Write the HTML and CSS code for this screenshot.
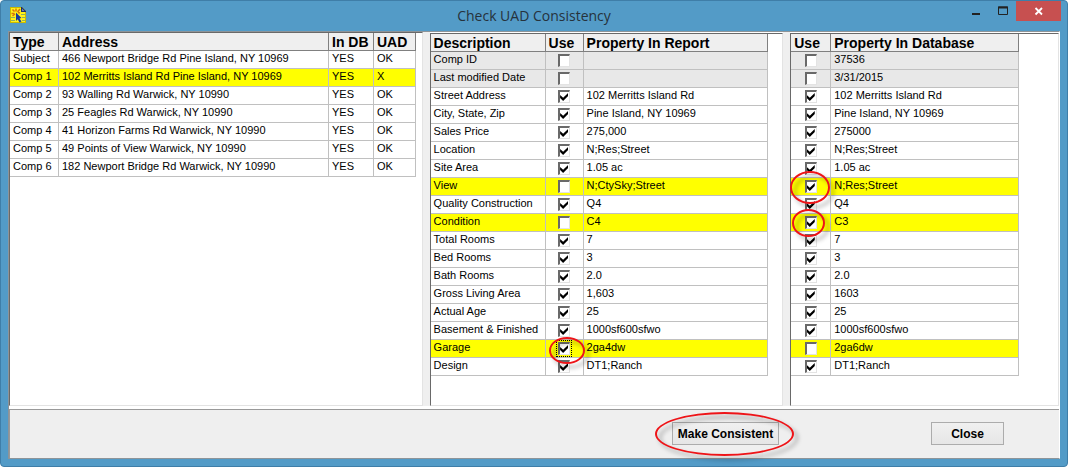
FILE: index.html
```
<!DOCTYPE html>
<html lang="en">
<head>
<meta charset="utf-8">
<title>Check UAD Consistency</title>
<link rel="stylesheet" href="styles.css">
</head>
<body>
<div class="window">
  <header class="titlebar">
    <svg class="app-icon" width="17" height="17" viewBox="0 0 17 17" aria-hidden="true">
      <path d="M0 0h12l4 4v12H0z" fill="#fff21a"/>
      <path d="M.5 0v16M0 15.500h16M15.500 4v12M0 .5h12" stroke="#c9b800" fill="none"/>
      <path d="M11 0h1l4 4v1h-5z" fill="#1c2f6a"/>
      <path d="M12 1.500l2.500 2.500H12z" fill="#6f86b8"/>
      <path d="M1 10.500h4M1 13.500h4M11 7.500h4M12 10.500h3M12 13.500h3" stroke="#8fae62"/>
      <path d="M2.500 2.500l2 2M6 1.500v3M10 2L7.500 5M1.500 6.500h3M2.500 9l2.500-2M8 5.500l2 .5" stroke="#d9730d" stroke-width="1.500"/>
      <path d="M6 5.500l5.500 5.500-2 .5 2 3-2 1-1.800-3.200L6 14z" fill="#16389c"/>
    </svg>
    <h1 class="title">Check UAD Consistency</h1>
    <div class="controls">
      <button class="ctl" type="button" aria-label="Minimize"><svg width="10" height="12" viewBox="0 0 10 12"><path d="M1 8h8v2H1z" fill="#222"/></svg></button>
      <button class="ctl" type="button" aria-label="Maximize"><svg width="12" height="12" viewBox="0 0 12 12"><path d="M1.500 2h9v7.500h-9z" fill="none" stroke="#222"/><path d="M1 2.500h10" stroke="#222" stroke-width="2"/></svg></button>
      <button class="ctl ctl-close" type="button" aria-label="Close window"><svg width="10" height="10" viewBox="0 0 10 10"><path d="M1.500 2l6.500 6.500M8 2L1.500 8.500" stroke="#fff" stroke-width="1.800"/></svg></button>
    </div>
  </header>
  <main class="client">
    <div class="panels">
      <section class="panel panel-comps">
        <table class="grid">
          <thead><tr><th class="c-type">Type</th><th class="c-address">Address</th><th class="c-db">In DB</th><th class="c-uad">UAD</th></tr></thead>
          <tbody>
            <tr><td>Subject</td><td>466 Newport Bridge Rd Pine Island, NY 10969</td><td>YES</td><td>OK</td></tr>
            <tr class="mark"><td>Comp 1</td><td>102 Merritts Island Rd Pine Island, NY 10969</td><td>YES</td><td>X</td></tr>
            <tr><td>Comp 2</td><td>93 Walling Rd Warwick, NY 10990</td><td>YES</td><td>OK</td></tr>
            <tr><td>Comp 3</td><td>25 Feagles Rd Warwick, NY 10990</td><td>YES</td><td>OK</td></tr>
            <tr><td>Comp 4</td><td>41 Horizon Farms Rd Warwick, NY 10990</td><td>YES</td><td>OK</td></tr>
            <tr><td>Comp 5</td><td>49 Points of View Warwick, NY 10990</td><td>YES</td><td>OK</td></tr>
            <tr><td>Comp 6</td><td>182 Newport Bridge Rd Warwick, NY 10990</td><td>YES</td><td>OK</td></tr>
          </tbody>
        </table>
      </section>
      <section class="panel panel-report">
        <table class="grid">
          <thead><tr><th class="c-desc">Description</th><th class="c-use">Use</th><th class="c-report">Property In Report</th></tr></thead>
          <tbody>
            <tr class="off"><td>Comp ID</td><td class="use"><input type="checkbox" aria-label="Use report Comp ID"></td><td></td></tr>
            <tr class="off"><td>Last modified Date</td><td class="use"><input type="checkbox" aria-label="Use report Last modified Date"></td><td></td></tr>
            <tr><td>Street Address</td><td class="use"><input type="checkbox" checked aria-label="Use report Street Address"></td><td>102 Merritts Island Rd</td></tr>
            <tr><td>City, State, Zip</td><td class="use"><input type="checkbox" checked aria-label="Use report City, State, Zip"></td><td>Pine Island, NY 10969</td></tr>
            <tr><td>Sales Price</td><td class="use"><input type="checkbox" checked aria-label="Use report Sales Price"></td><td>275,000</td></tr>
            <tr><td>Location</td><td class="use"><input type="checkbox" checked aria-label="Use report Location"></td><td>N;Res;Street</td></tr>
            <tr><td>Site Area</td><td class="use"><input type="checkbox" checked aria-label="Use report Site Area"></td><td>1.05 ac</td></tr>
            <tr class="mark"><td>View</td><td class="use"><input type="checkbox" aria-label="Use report View"></td><td>N;CtySky;Street</td></tr>
            <tr><td>Quality Construction</td><td class="use"><input type="checkbox" checked aria-label="Use report Quality Construction"></td><td>Q4</td></tr>
            <tr class="mark"><td>Condition</td><td class="use"><input type="checkbox" aria-label="Use report Condition"></td><td>C4</td></tr>
            <tr><td>Total Rooms</td><td class="use"><input type="checkbox" checked aria-label="Use report Total Rooms"></td><td>7</td></tr>
            <tr><td>Bed Rooms</td><td class="use"><input type="checkbox" checked aria-label="Use report Bed Rooms"></td><td>3</td></tr>
            <tr><td>Bath Rooms</td><td class="use"><input type="checkbox" checked aria-label="Use report Bath Rooms"></td><td>2.0</td></tr>
            <tr><td>Gross Living Area</td><td class="use"><input type="checkbox" checked aria-label="Use report Gross Living Area"></td><td>1,603</td></tr>
            <tr><td>Actual Age</td><td class="use"><input type="checkbox" checked aria-label="Use report Actual Age"></td><td>25</td></tr>
            <tr><td>Basement &amp; Finished</td><td class="use"><input type="checkbox" checked aria-label="Use report Basement and Finished"></td><td>1000sf600sfwo</td></tr>
            <tr class="mark"><td>Garage</td><td class="use"><input class="focused" type="checkbox" checked aria-label="Use report Garage"><span class="ring ring-garage"></span></td><td>2ga4dw</td></tr>
            <tr><td>Design</td><td class="use"><input type="checkbox" checked aria-label="Use report Design"></td><td>DT1;Ranch</td></tr>
          </tbody>
        </table>
      </section>
      <section class="panel panel-database">
        <table class="grid">
          <thead><tr><th class="c-use-db">Use</th><th class="c-database">Property In Database</th></tr></thead>
          <tbody>
            <tr class="off"><td class="use"><input type="checkbox" aria-label="Use database Comp ID"></td><td>37536</td></tr>
            <tr class="off"><td class="use"><input type="checkbox" aria-label="Use database Last modified Date"></td><td>3/31/2015</td></tr>
            <tr><td class="use"><input type="checkbox" checked aria-label="Use database Street Address"></td><td>102 Merritts Island Rd</td></tr>
            <tr><td class="use"><input type="checkbox" checked aria-label="Use database City, State, Zip"></td><td>Pine Island, NY 10969</td></tr>
            <tr><td class="use"><input type="checkbox" checked aria-label="Use database Sales Price"></td><td>275000</td></tr>
            <tr><td class="use"><input type="checkbox" checked aria-label="Use database Location"></td><td>N;Res;Street</td></tr>
            <tr><td class="use"><input type="checkbox" checked aria-label="Use database Site Area"></td><td>1.05 ac</td></tr>
            <tr class="mark"><td class="use"><input type="checkbox" checked aria-label="Use database View"><span class="ring ring-view"></span></td><td>N;Res;Street</td></tr>
            <tr><td class="use"><input type="checkbox" checked aria-label="Use database Quality Construction"></td><td>Q4</td></tr>
            <tr class="mark"><td class="use"><input type="checkbox" checked aria-label="Use database Condition"><span class="ring ring-condition"></span></td><td>C3</td></tr>
            <tr><td class="use"><input type="checkbox" checked aria-label="Use database Total Rooms"></td><td>7</td></tr>
            <tr><td class="use"><input type="checkbox" checked aria-label="Use database Bed Rooms"></td><td>3</td></tr>
            <tr><td class="use"><input type="checkbox" checked aria-label="Use database Bath Rooms"></td><td>2.0</td></tr>
            <tr><td class="use"><input type="checkbox" checked aria-label="Use database Gross Living Area"></td><td>1603</td></tr>
            <tr><td class="use"><input type="checkbox" checked aria-label="Use database Actual Age"></td><td>25</td></tr>
            <tr><td class="use"><input type="checkbox" checked aria-label="Use database Basement and Finished"></td><td>1000sf600sfwo</td></tr>
            <tr class="mark"><td class="use"><input type="checkbox" aria-label="Use database Garage"></td><td>2ga6dw</td></tr>
            <tr><td class="use"><input type="checkbox" checked aria-label="Use database Design"></td><td>DT1;Ranch</td></tr>
          </tbody>
        </table>
      </section>
    </div>
    <footer class="actions">
      <div class="action-main"><button class="btn btn-main" type="button">Make Consistent</button><span class="ring ring-button"></span></div>
      <button class="btn btn-close" type="button">Close</button>
    </footer>
  </main>
</div>
</body>
</html>
```

FILE: styles.css
```
* {
  box-sizing: border-box;
}

body {
  margin: 0;
  background: #fff;
  color: #000;
  font: 11px/14px "Liberation Sans", Arial, sans-serif;
}

.window {
  display: flex;
  flex-direction: column;
  min-height: 100vh;
  padding: 0 7px 7px;
  border: 1px solid #3f7ea8;
  border-radius: 4px;
  background: #539bc7;
}

/* Title bar */
.titlebar {
  display: grid;
  grid-template-columns: 1fr auto 1fr;
  height: 30px;
}

.app-icon {
  margin: 6px 0 0 2px;
}

.title {
  margin: 0;
  color: #26323c;
  font: 400 14px/29px "Open Sans", "Noto Sans", sans-serif;
}

.controls {
  display: flex;
  justify-content: flex-end;
  align-items: flex-start;
  margin-right: -1px;
}

.ctl {
  display: flex;
  justify-content: center;
  align-items: center;
  width: 27px;
  height: 20px;
  padding: 0;
  border: 0;
  background: transparent;
}

.ctl-close {
  width: 45px;
  background: #c75050;
}

/* Client area */
.client {
  display: flex;
  flex: 1;
  flex-direction: column;
  border: 1px solid #8d9499;
  border-right-color: #fff;
  background: #efefef;
}

.panels {
  display: grid;
  flex: 1;
  grid-template-columns: 414fr 354fr 269fr;
  gap: 7px;
  background: #efefef;
}

.panel {
  border: 1px solid #e3e3e3;
  border-top-color: #696969;
  border-left-color: #696969;
  background: #fff;
}

.panel-report,
.panel-database {
  margin-top: 1px;
  box-shadow: 0 -1px 0 #fff;
}

.grid {
  border-spacing: 0;
  table-layout: fixed;
  width: 0;
}

.grid th {
  height: 18px;
  padding: 1px 0 0 3px;
  border-right: 1px solid #808080;
  border-bottom: 1px solid #808080;
  background: #efefef;
  font: 700 14px/16px "Liberation Sans", Arial, sans-serif;
  text-align: left;
  white-space: nowrap;
}

.grid td {
  height: 18px;
  padding: 0 0 0 3px;
  border-right: 1px solid #c0c0c0;
  border-bottom: 1px solid #c0c0c0;
  vertical-align: top;
  white-space: nowrap;
}

.c-type { width: 49px; }
.c-address { width: 270px; }
.c-db { width: 45px; }
.c-uad { width: 42px; }
.c-desc { width: 115px; }
.c-use { width: 38px; }
.c-report { width: 184px; }
.c-use-db { width: 40px; }
.c-database { width: 188px; }

.mark td { background: #ff0; }
.off td { background: #e8e8e8; }

.grid .use {
  position: relative;
  padding: 2px 0 0;
  line-height: 0;
  text-align: center;
}

.use input {
  appearance: none;
  width: 12px;
  height: 13px;
  margin: 0;
  border: 1px solid #e3e3e3;
  border-top: 2px solid #696969;
  border-left: 2px solid #696969;
  background: #fff;
}

.use input:checked::before {
  content: "";
  display: block;
  width: 8px;
  height: 8px;
  margin-top: 1px;
  background: #000;
  clip-path: polygon(0 25%, 38% 60%, 100% 0, 100% 38%, 38% 100%, 0 64%);
}

.use .focused {
  outline: 1px dotted #000;
  outline-offset: 1px;
}

/* Callout rings */
.ring {
  position: absolute;
  z-index: 1;
  border: 2px solid #ee1418;
  border-radius: 50%;
  filter: drop-shadow(4px 4px 2px rgba(0, 0, 0, 0.35));
  pointer-events: none;
}

.ring-garage {
  top: -3px;
  left: 3px;
  width: 36px;
  height: 27px;
}

.ring-view {
  top: -7px;
  left: -1px;
  width: 40px;
  height: 33px;
}

.ring-condition {
  top: -5px;
  left: 1px;
  width: 33px;
  height: 28px;
}

.ring-button {
  inset: -10px -15px -11px -17px;
}

/* Footer */
.actions {
  display: flex;
  justify-content: flex-end;
  align-items: center;
  gap: 152px;
  height: 52px;
  padding: 0 55px 0 0;
  border-top: 3px solid #fff;
  box-shadow: inset 1px 1px 0 #999;
}

.action-main {
  position: relative;
}

.btn {
  display: block;
  height: 23px;
  padding: 0;
  border: 1px solid #acacac;
  background: linear-gradient(#f0f0f0, #e6e6e6);
  color: #000;
  font: 700 12px/20px "Liberation Sans", Arial, sans-serif;
}

.btn-main { width: 107px; }
.btn-close { width: 73px; }
```
